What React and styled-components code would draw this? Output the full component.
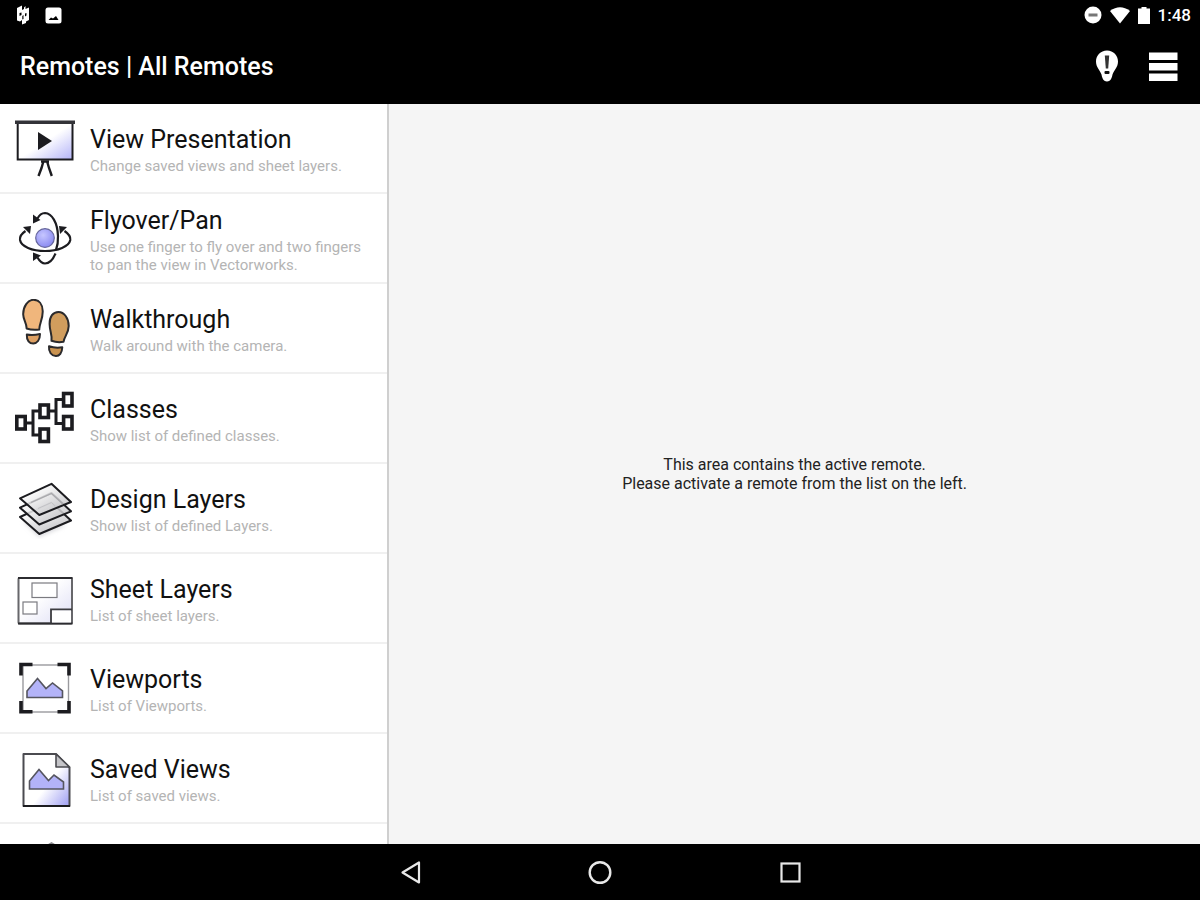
import React from "react";
import styled, { createGlobalStyle } from "styled-components";

const INK = "#1c1c20";
const LILAC = "#b3b3f8";

const GlobalStyle = createGlobalStyle`
  * {
    box-sizing: border-box;
  }
  body {
    margin: 0;
    background: #000;
    font-family: Roboto, "Liberation Sans", sans-serif;
  }
`;

const Screen = styled.div`
  display: flex;
  flex-direction: column;
  height: 100vh;
`;

const StatusBar = styled.div`
  display: flex;
  flex: none;
  justify-content: space-between;
  align-items: center;
  height: 30px;
  padding: 0 9px 0 16px;
  background: #000;
  color: #fff;
`;

const StatusGroup = styled.div`
  display: flex;
  align-items: center;
  gap: ${props => props.$gap}px;
`;

const Clock = styled.time`
  font-size: 17px;
  line-height: 20px;
  font-weight: 500;
`;

const AppBar = styled.header`
  display: flex;
  flex: none;
  justify-content: space-between;
  align-items: center;
  height: 74px;
  padding: 0 20px;
  background: #000;
  color: #fff;
`;

const AppTitle = styled.h1`
  margin: 0;
  font-size: 25px;
  line-height: 32px;
  font-weight: 500;
`;

const Actions = styled.div`
  display: flex;
  align-items: center;
  gap: 24px;
  padding-bottom: 3px;
`;

const IconButton = styled.button`
  display: flex;
  justify-content: center;
  align-items: center;
  padding: 0;
  border: 0;
  background: none;
  color: inherit;
  cursor: pointer;
`;

const Body = styled.main`
  display: grid;
  flex: 1;
  grid-template-columns: 12fr 25fr;
  min-height: 0;
`;

const RemoteList = styled.ul`
  margin: 0;
  padding: 0;
  overflow: hidden;
  list-style: none;
  background: #fff;
  border-right: 2px solid #cfcfcf;
`;

const RemoteItem = styled.li`
  border-bottom: 2px solid #f0f0f0;
`;

const RemoteButton = styled.button`
  display: flex;
  align-items: center;
  gap: 15px;
  width: 100%;
  height: 88px;
  padding: 2px 15px 0;
  border: 0;
  background: none;
  font-family: inherit;
  text-align: left;
  cursor: pointer;

  svg {
    flex: none;
  }
`;

const RemoteText = styled.span`
  display: flex;
  flex-direction: column;
  gap: 3px;
  padding-top: 3px;
`;

const RemoteName = styled.span`
  font-size: 25px;
  line-height: 28px;
  color: #111;
`;

const RemoteHint = styled.span`
  font-size: 15px;
  line-height: 18px;
  color: #b4b4b4;
`;

const ActiveArea = styled.section`
  display: flex;
  justify-content: center;
  align-items: center;
  background: #f5f5f5;
`;

const Notice = styled.p`
  margin: 0;
  font-size: 16px;
  line-height: 19px;
  text-align: center;
  color: #222;
`;

const NavBar = styled.nav`
  display: flex;
  flex: none;
  justify-content: center;
  align-items: center;
  gap: 166px;
  height: 56px;
  background: #000;
  color: #e8e8e8;
`;

function RemoteIcon({ children }) {
  return (
    <svg width="60" height="60" viewBox="0 0 60 60" fill="none" aria-hidden="true">
      {children}
    </svg>
  );
}

function PresentationIcon() {
  return (
    <RemoteIcon>
      <defs>
        <linearGradient id="board" x1="0" y1="0" x2="1" y2="1">
          <stop offset="0.5" stopColor="#fff" />
          <stop offset="1" stopColor={LILAC} />
        </linearGradient>
      </defs>
      <rect x="2.7" y="4" width="54.8" height="36.5" fill="url(#board)" stroke={INK} strokeWidth="2" />
      <path d="M0 3.3H60" stroke="#333338" strokeWidth="3.4" />
      <path d="M23 13V31L37 22Z" fill={INK} />
      <path d="M26 42.5H34M28.5 42L26.5 49L23.5 57M32 42L34 49L36.8 57" stroke={INK} strokeWidth="2.4" />
    </RemoteIcon>
  );
}

function FlyoverIcon() {
  return (
    <RemoteIcon>
      <defs>
        <radialGradient id="ball" cx="0.4" cy="0.35" r="0.7">
          <stop offset="0" stopColor="#c6c6ff" />
          <stop offset="1" stopColor="#8888f0" />
        </radialGradient>
      </defs>
      <circle cx="30" cy="29" r="9.3" fill="url(#ball)" stroke="#66669c" strokeWidth="1.2" />
      <path
        d="M10.5 22C6 25 4.6 28 5 31C6.2 37.5 17 42 30 42C43 42 54 37.5 55.3 31C55.7 28 54 25 49.5 22"
        stroke={INK}
        strokeWidth="2.2"
      />
      <path d="M22.5 9.5C24.5 5.5 27 4 30 4C37 4.5 42.5 13.5 43 27C43.2 33 42.5 37 41 41" stroke={INK} strokeWidth="2.2" />
      <path d="M40.5 44.5C38 50.500 34.5 54.5 30 54.5C27 54.5 24.5 52 22.5 48.5" stroke={INK} strokeWidth="2.2" />
      <path d="M8 18L16 17L15 25Z M52 18L44 17L45 25Z" fill={INK} />
      <path d="M18 5.5L18 14.5L25.5 11Z M18 52L18 43.5L26 46.5Z" fill={INK} />
    </RemoteIcon>
  );
}

function FootprintsIcon() {
  return (
    <RemoteIcon>
      <g stroke="#2b2a2c" strokeWidth="2" strokeLinejoin="round">
        <path
          d="M18.5 0.8C13 0.8 8 7.5 8.2 15.5C8.3 21 11.8 24 11.6 29.5Q17 31.3 24.3 30.5C24 25.5 28 20 27.7 12C27.5 5 24 0.8 18.5 0.8Z"
          fill="#f0b67c"
        />
        <path d="M11.8 35.6Q18 36.8 25 35C25 41 22 44.5 18.3 44.5C14.5 44.5 11.5 41.5 11.8 35.6Z" fill="#dda063" />
        <path
          d="M43.5 13C38 13 34.5 17.5 34.6 25C34.7 33 37.5 36 36.5 41.8Q42 43.8 48.5 42.8C49.3 37.5 53.7 34 53.7 27C53.7 19 49 13 43.5 13Z"
          fill="#d19d5d"
        />
        <path d="M34 47.3Q40.5 49.5 47.3 48.3C47 54 44.5 57.3 40.8 57.1C36.5 56.9 33.5 53 34 47.3Z" fill="#c9924f" />
      </g>
    </RemoteIcon>
  );
}

function ClassesIcon() {
  return (
    <RemoteIcon>
      <path d="M10 34H18M24 22H18V46H25M34 22H41M48 10.5H41V34.5H48" stroke={INK} strokeWidth="3" />
      <g fill="#fff" stroke={INK} strokeWidth="3.6">
        <rect x="1.8" y="27.5" width="8.4" height="12.5" />
        <rect x="25" y="16" width="8.4" height="12.5" />
        <rect x="25" y="40" width="8.4" height="12.5" />
        <rect x="48.6" y="4.5" width="8.4" height="12.5" />
        <rect x="48.6" y="27.5" width="8.4" height="12.5" />
      </g>
    </RemoteIcon>
  );
}

function DesignLayersIcon() {
  return (
    <RemoteIcon>
      <defs>
        <linearGradient id="sheet" x1="0" y1="0" x2="1" y2="1">
          <stop offset="0.2" stopColor="#fff" stopOpacity="0.85" />
          <stop offset="1" stopColor="#b4b4b8" stopOpacity="0.85" />
        </linearGradient>
        <filter id="soft">
          <feGaussianBlur stdDeviation="2" />
        </filter>
      </defs>
      <path d="M8 42L24 58L52 46Z" fill="#d8d8dc" filter="url(#soft)" />
      <g fill="url(#sheet)" stroke={INK} strokeWidth="2" strokeLinejoin="round">
        <path d="M36.5 23.5L56 41.5L24.3 55L5 38Z" />
        <path d="M36.5 14L56 32.3L24.3 45.5L5 28.7Z" />
        <path d="M36.5 4.8L56 23L24.3 36L5 19.3Z" />
      </g>
      <path d="M16 23.5L36.5 14.500L48 25" stroke="#a8a8ac" strokeWidth="1.2" />
      <path d="M23 29.5L36.5 23.5L40 27" stroke="#c2c2c6" />
    </RemoteIcon>
  );
}

function SheetLayersIcon() {
  return (
    <RemoteIcon>
      <defs>
        <linearGradient id="plan" x1="0" y1="0" x2="1" y2="1">
          <stop offset="0.4" stopColor="#fff" />
          <stop offset="1" stopColor="#dcdcf4" />
        </linearGradient>
      </defs>
      <rect x="3.5" y="9" width="53.5" height="45.5" rx="1" fill="url(#plan)" stroke="#67676b" strokeWidth="2" />
      <path d="M3 9H57.5M3 54.5H57.5" stroke="#2c2c30" strokeWidth="2" />
      <rect x="17" y="14" width="25" height="14.5" fill="#fff" stroke="#7b7b80" strokeWidth="1.2" />
      <rect x="8" y="33" width="14" height="12" fill="#fff" stroke="#7b7b80" strokeWidth="1.2" />
      <path d="M36 54.5V40.5H57" fill="none" stroke="#3c3c40" strokeWidth="1.8" />
      <rect x="37" y="41.5" width="19" height="12" fill="#fff" />
    </RemoteIcon>
  );
}

function ViewportsIcon() {
  return (
    <RemoteIcon>
      <rect x="8" y="6" width="45.5" height="47" fill="#fff" stroke="#9a9a9e" strokeWidth="1.4" />
      <path
        d="M6 16.5V5.5H17.5M42.5 5.5H54V16.5M54 42V52.8H42.5M17.5 52.8H6V42"
        stroke={INK}
        strokeWidth="3.6"
      />
      <path d="M12 38.5V32L22.5 19.5L31 29.5L37.5 24L47.5 32V38.5Z" fill={LILAC} stroke="#55555f" strokeWidth="1.6" />
    </RemoteIcon>
  );
}

function SavedViewsIcon() {
  return (
    <RemoteIcon>
      <defs>
        <linearGradient id="page" x1="0.2" y1="0.4" x2="0.9" y2="1">
          <stop offset="0.4" stopColor="#fff" />
          <stop offset="1" stopColor="#a9a9f4" />
        </linearGradient>
      </defs>
      <path d="M8.5 5H41L54.5 18.5V57H8.5Z" fill="url(#page)" stroke="#4b4b50" strokeWidth="2" strokeLinejoin="round" />
      <path d="M41 5V18H54.5Z" fill="#c4c4c8" stroke="#4b4b50" strokeWidth="1.6" strokeLinejoin="round" />
      <path d="M8 57H55" stroke={INK} strokeWidth="2" />
      <path d="M14.5 40V32L24 20.5L33.5 31.5L39 26L48.5 33V40Z" fill={LILAC} stroke="#55555f" strokeWidth="1.6" />
    </RemoteIcon>
  );
}

function CameraIcon() {
  return (
    <RemoteIcon>
      <path d="M30 8L36.5 4L43 8L56 20L30 40L5 20Z" fill="#fff" stroke="#8a8a8e" strokeWidth="1.8" />
    </RemoteIcon>
  );
}

const remotes = [
  { name: "View Presentation", hint: "Change saved views and sheet layers.", icon: PresentationIcon },
  {
    name: "Flyover/Pan",
    hint: "Use one finger to fly over and two fingers to pan the view in Vectorworks.",
    icon: FlyoverIcon
  },
  { name: "Walkthrough", hint: "Walk around with the camera.", icon: FootprintsIcon },
  { name: "Classes", hint: "Show list of defined classes.", icon: ClassesIcon },
  { name: "Design Layers", hint: "Show list of defined Layers.", icon: DesignLayersIcon },
  { name: "Sheet Layers", hint: "List of sheet layers.", icon: SheetLayersIcon },
  { name: "Viewports", hint: "List of Viewports.", icon: ViewportsIcon },
  { name: "Saved Views", hint: "List of saved views.", icon: SavedViewsIcon }
];

function Remote({ name, hint, icon: Icon }) {
  return (
    <RemoteItem>
      <RemoteButton type="button">
        <Icon />
        <RemoteText>
          <RemoteName>{name}</RemoteName>
          <RemoteHint>{hint}</RemoteHint>
        </RemoteText>
      </RemoteButton>
    </RemoteItem>
  );
}

function Status() {
  return (
    <StatusBar>
      <StatusGroup $gap={15}>
        <svg width="14" height="20" viewBox="0 0 14 20" fill="#fff" aria-hidden="true">
          <path d="M1 3L6 0.5V5L8 4V2.500L9.500 1V4L13 2.500V15L10 16.500V18L6 19.500V15L4 16.500L1 15.500Z" />
          <path d="M3.500 8L5.500 7.500V10L3.500 11ZM9 8.500L10.500 8V10.500L9 11.500ZM6.300 11L7.500 10V14L6.300 14.500Z" fill="#000" />
        </svg>
        <svg width="17" height="17" viewBox="0 0 17 17" aria-hidden="true">
          <rect x="0.5" y="0.5" width="16" height="16" rx="2.5" fill="#fff" />
          <path d="M3.500 13L6 10.500L8 11.500L11 9L13.500 13Z" fill="#000" />
        </svg>
      </StatusGroup>
      <StatusGroup $gap={8}>
        <svg width="18" height="18" viewBox="0 0 18 18" aria-hidden="true">
          <circle cx="9" cy="9" r="8.5" fill="#fff" />
          <rect x="4.5" y="7.5" width="9" height="3" fill="#777" />
        </svg>
        <svg width="20" height="17" viewBox="0 0 20 17" fill="#fff" aria-hidden="true">
          <path d="M0 4Q10 -3.5 20 4L10 16.5Z" />
        </svg>
        <svg width="12" height="17" viewBox="0 0 12 17" fill="#fff" aria-hidden="true">
          <path d="M0 1.5H3.5V0H8.5V1.5H12V17H0Z" />
        </svg>
        <Clock>1:48</Clock>
      </StatusGroup>
    </StatusBar>
  );
}

function App() {
  return (
    <>
      <GlobalStyle />
      <Screen>
        <Status />
        <AppBar>
          <AppTitle>Remotes | All Remotes</AppTitle>
          <Actions>
            <IconButton type="button" aria-label="Tips">
              <svg width="30" height="34" viewBox="0 0 30 34" aria-hidden="true">
                <path
                  d="M15 1.5C8.5 1.5 4 6.5 4 12.5C4 18.5 8 21 9.5 25.5C10 28 11 32.5 15 32.5C19 32.5 20 28 20.5 25.5C22 21 26 18.5 26 12.5C26 6.5 21.5 1.5 15 1.5Z"
                  fill="#fff"
                />
                <path d="M12.8 6.5H17.2L16.2 19.5H13.8Z" fill="#333" />
                <rect x="12.5" y="22" width="5" height="3" rx="1" fill="#111" />
              </svg>
            </IconButton>
            <IconButton type="button" aria-label="Menu">
              <svg width="34" height="34" viewBox="0 0 34 34" fill="#fff" aria-hidden="true">
                <path d="M3 3.5H31.5V11H3ZM3 14H31.5V21.5H3ZM3 24.5H31.5V32H3Z" />
              </svg>
            </IconButton>
          </Actions>
        </AppBar>
        <Body>
          <RemoteList>
            {remotes.map(remote => (
              <Remote key={remote.name} {...remote} />
            ))}
            <RemoteItem>
              <RemoteButton type="button" aria-label="Camera">
                <CameraIcon />
              </RemoteButton>
            </RemoteItem>
          </RemoteList>
          <ActiveArea>
            <Notice>
              This area contains the active remote.
              <br />
              Please activate a remote from the list on the left.
            </Notice>
          </ActiveArea>
        </Body>
        <NavBar>
          <IconButton type="button" aria-label="Back">
            <svg width="24" height="24" viewBox="0 0 24 24" fill="none" aria-hidden="true">
              <path d="M21 2.5V22.5L4.500 12.5Z" stroke="currentColor" strokeWidth="2.2" strokeLinejoin="round" />
            </svg>
          </IconButton>
          <IconButton type="button" aria-label="Home">
            <svg width="24" height="24" viewBox="0 0 24 24" fill="none" aria-hidden="true">
              <circle cx="12" cy="12.5" r="10.3" stroke="currentColor" strokeWidth="2.4" />
            </svg>
          </IconButton>
          <IconButton type="button" aria-label="Recent apps">
            <svg width="24" height="24" viewBox="0 0 24 24" fill="none" aria-hidden="true">
              <rect x="3.5" y="3.5" width="18" height="18" stroke="currentColor" strokeWidth="2.2" />
            </svg>
          </IconButton>
        </NavBar>
      </Screen>
    </>
  );
}

export default App;
